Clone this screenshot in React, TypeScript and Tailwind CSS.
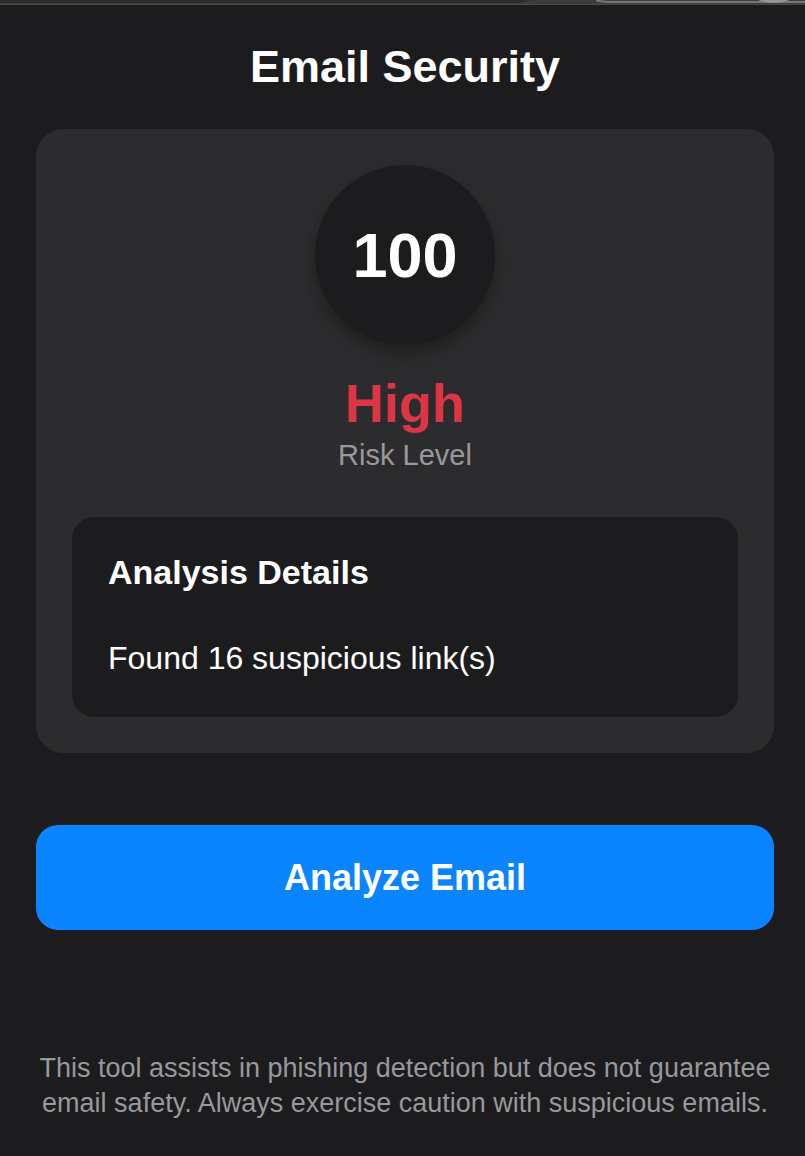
import React from "react";

const score = 100;
const findings = ["Found 16 suspicious link(s)"];

function WindowEdge() {
  return (
    <svg className="block h-[5px] w-full" viewBox="0 0 805 5" preserveAspectRatio="none" aria-hidden="true">
      <rect width="805" height="5" fill="#3c3c3c" />
      <path d="M0 0H530Q524 3 514 3H0Z" fill="#2b2b2b" />
      <path d="M596 0Q602 2 612 2H805" fill="none" stroke="#777777" strokeWidth="2" />
      <path d="M758 0Q766 3 774 3T790 0Z" fill="#969696" />
      <rect y="4" width="805" height="1" fill="#484848" />
    </svg>
  );
}

export default function App() {
  return (
    <div className="min-h-screen bg-[#1c1c1e] font-['Liberation_Sans',Arial,sans-serif] text-white">
      <WindowEdge />
      <main className="flex flex-col pt-9 pr-[31px] pb-8 pl-9">
        <h1 className="text-center text-[45px] leading-[52px] font-bold">Email Security</h1>
        <section className="mt-9 rounded-[27px] bg-[#2c2c2e] p-9">
          <div className="flex flex-col items-center">
            <div className="flex size-[180px] items-center justify-center rounded-full bg-[#1c1c1e] text-[63px] leading-[72px] font-bold shadow-[0_9px_18px_rgba(0,0,0,0.3)]">
              {score}
            </div>
            <p className="mt-[27px] text-[54px] leading-[62px] font-bold text-[#dc3545]">High</p>
            <p className="mt-[5px] text-[29px] leading-[33px] text-[#98989d]">Risk Level</p>
          </div>
          <div className="mt-[45px] rounded-[22px] bg-[#1c1c1e] p-9">
            <h2 className="text-[34px] leading-[38px] font-bold">Analysis Details</h2>
            <ul className="mt-[44px]">
              {findings.map((item) => (
                <li key={item} className="text-[32px] leading-[46px]">{item}</li>
              ))}
            </ul>
          </div>
        </section>
        <button type="button" className="mt-[72px] rounded-[22px] bg-[#0a84ff] py-8 text-[36px] leading-[41px] font-bold">
          Analyze Email
        </button>
        <p className="mt-[121px] text-center text-[27px] leading-[35px] text-[#98989d]">
          This tool assists in phishing detection but does not guarantee email safety. Always exercise caution with suspicious emails.
        </p>
      </main>
    </div>
  );
}
